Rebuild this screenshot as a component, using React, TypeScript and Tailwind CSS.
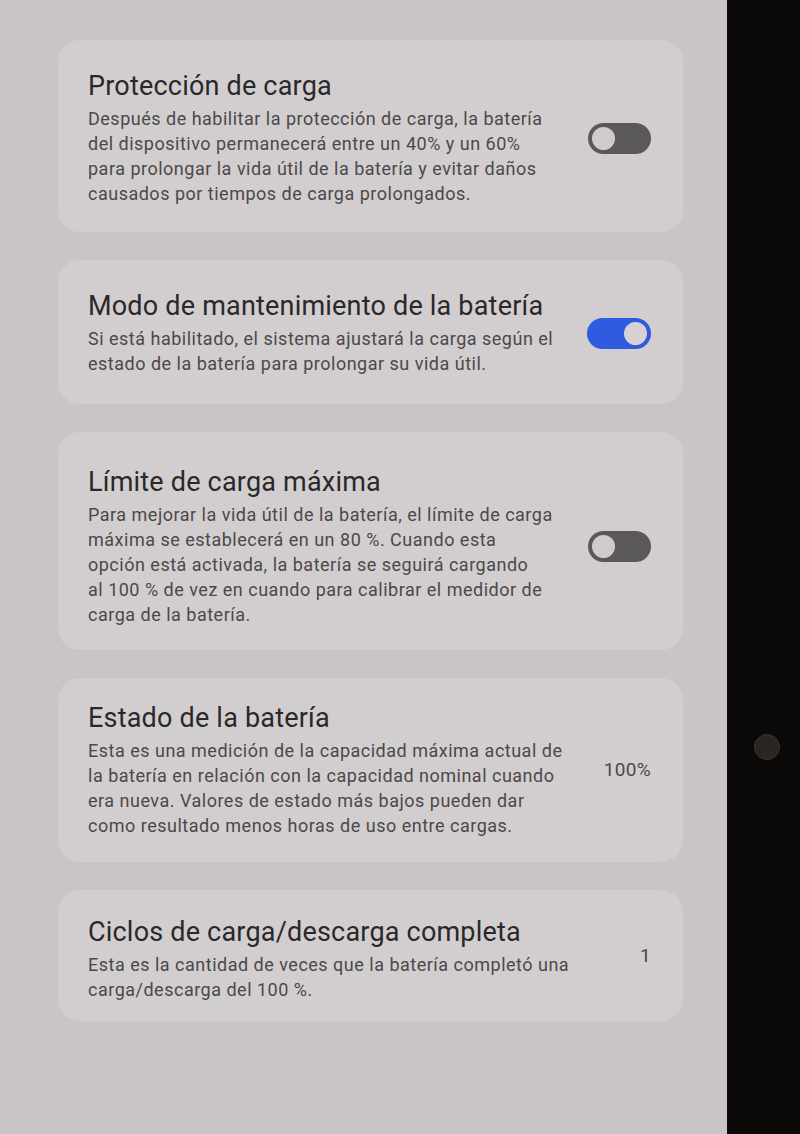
import React from 'react'

type Item = {
  title: string
  lines: string[]
  control: 'off' | 'on' | string
  pad: string
}

const items: Item[] = [
  {
    title: 'Protección de carga',
    lines: [
      'Después de habilitar la protección de carga, la batería',
      'del dispositivo permanecerá entre un 40% y un 60%',
      'para prolongar la vida útil de la batería y evitar daños',
      'causados por tiempos de carga prolongados.',
    ],
    control: 'off',
    pad: 'pt-[30px] pb-[26px]',
  },
  {
    title: 'Modo de mantenimiento de la batería',
    lines: [
      'Si está habilitado, el sistema ajustará la carga según el',
      'estado de la batería para prolongar su vida útil.',
    ],
    control: 'on',
    pad: 'pt-[30px] pb-[28px]',
  },
  {
    title: 'Límite de carga máxima',
    lines: [
      'Para mejorar la vida útil de la batería, el límite de carga',
      'máxima se establecerá en un 80 %. Cuando esta',
      'opción está activada, la batería se seguirá cargando',
      'al 100 % de vez en cuando para calibrar el medidor de',
      'carga de la batería.',
    ],
    control: 'off',
    pad: 'pt-[34px] pb-[23px]',
  },
  {
    title: 'Estado de la batería',
    lines: [
      'Esta es una medición de la capacidad máxima actual de',
      'la batería en relación con la capacidad nominal cuando',
      'era nueva. Valores de estado más bajos pueden dar',
      'como resultado menos horas de uso entre cargas.',
    ],
    control: '100%',
    pad: 'pt-[24px] pb-[24px]',
  },
  {
    title: 'Ciclos de carga/descarga completa',
    lines: [
      'Esta es la cantidad de veces que la batería completó una',
      'carga/descarga del 100 %.',
    ],
    control: '1',
    pad: 'pt-[26px] pb-[19px]',
  },
]

function Toggle({ on }: { on: boolean }) {
  if (on) {
    return (
      <div className="w-[64px] h-[31px] rounded-full bg-[#2f5be0] flex items-center justify-end pr-[1px]">
        <div className="w-[29px] h-[29px] rounded-full bg-[#d6d2d3] border-[3px] border-[#2f5be0]" />
      </div>
    )
  }
  return (
    <div className="w-[63px] h-[31px] rounded-full bg-[#5b5859] flex items-center pl-[1px]">
      <div className="w-[29px] h-[29px] rounded-full bg-[#cfcbcc] border-[3px] border-[#5b5859]" />
    </div>
  )
}

function Card({ item }: { item: Item }) {
  const isToggle = item.control === 'on' || item.control === 'off'
  const valueTop = item.control === '1'
  return (
    <div className={`rounded-[22px] bg-[#d2cecf] pl-[30px] pr-[32px] flex items-center ${item.pad}`}>
      <div className="flex-1">
        <div className="text-[27px] leading-[32px] text-[#2a2828] tracking-[0.2px]">{item.title}</div>
        <div className="mt-[4px] text-[18px] leading-[25px] text-[#4b4849] tracking-[0.5px]">
          {item.lines.map((l, i) => (
            <div key={i}>{l}</div>
          ))}
        </div>
      </div>
      <div className={valueTop ? 'self-start pt-[26px]' : ''}>
        {isToggle ? (
          <Toggle on={item.control === 'on'} />
        ) : (
          <div className="text-[19px] text-[#4b4849] tracking-[0.3px]">{item.control}</div>
        )}
      </div>
    </div>
  )
}

export default function App() {
  return (
    <div className="w-[800px] h-[1134px] flex bg-black overflow-hidden" style={{ fontFamily: 'Roboto, "Noto Sans", sans-serif' }}>
      <div className="w-[727px] h-full bg-[#c9c5c6] pl-[58px] pr-[44px] pt-[40px] flex flex-col gap-[28px]">
        {items.map((it, i) => (
          <Card key={i} item={it} />
        ))}
      </div>
      <div className="flex-1 h-full bg-[#0b0908] flex flex-col items-center pt-[734px] pl-[6px]">
        <div className="w-[26px] h-[26px] rounded-full bg-[#2a2622] border border-[#3a3530]" />
      </div>
    </div>
  )
}
